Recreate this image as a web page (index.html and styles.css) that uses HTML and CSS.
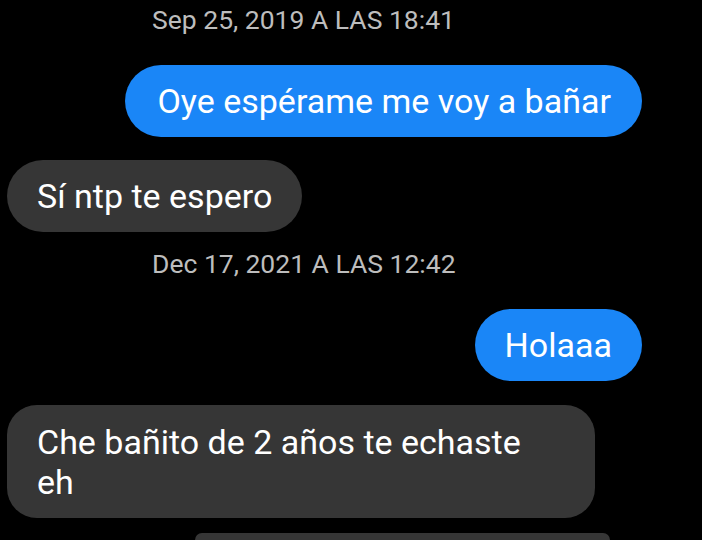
FILE: index.html
```html
<!DOCTYPE html>
<html lang="es">
<head>
<meta charset="utf-8">
<link rel="stylesheet" href="styles.css">
</head>
<body>
<main class="chat">
  <div class="stamp">Sep 25, 2019 A LAS 18:41</div>
  <div class="msg out first">Oye espérame me voy a bañar</div>
  <div class="msg in">Sí ntp te espero</div>
  <div class="stamp second">Dec 17, 2021 A LAS 12:42</div>
  <div class="msg out">Holaaa</div>
  <div class="msg in wide">Che bañito de 2 años te echaste eh</div>
  <div class="msg out tail"></div>
</main>
</body>
</html>
```

FILE: styles.css
```css
html, body {
  margin: 0;
  padding: 0;
  background: #000;
  overflow: hidden;
}

.chat {
  display: flex;
  flex-direction: column;
  width: 702px;
  height: 540px;
  overflow: hidden;
  padding: 0 60px 0 7px;
  box-sizing: border-box;
  font-family: Roboto, "Noto Sans", sans-serif;
}

.stamp {
  flex: none;
  margin: 5px 0 0 145px;
  color: #bdbdbd;
  font-size: 26.5px;
  line-height: 30px;
  height: 30px;
}

.stamp.second {
  margin-top: 17px;
}

.msg {
  flex: none;
  font-size: 34px;
  line-height: 40px;
  color: #fff;
  padding: 16px 30px;
  border-radius: 36px;
  box-sizing: border-box;
}

.msg.out {
  align-self: flex-end;
  background: #1a86f7;
}

.msg.in {
  align-self: flex-start;
  background: #363636;
  margin-top: 23px;
}

.msg.first {
  margin-top: 30px;
  padding: 16px 31px 16px 32px;
}

.stamp.second + .msg {
  margin-top: 30px;
}

.msg.wide {
  width: 588px;
  height: 113px;
  margin-top: 24px;
  padding-top: 17px;
  padding-right: 60px;
  border-radius: 30px;
}

.msg.tail {
  background: #363636;
  margin-top: 15px;
  width: 415px;
  height: 7px;
  padding: 0;
  margin-right: 32px;
  border-radius: 30px 30px 0 0;
}
```
